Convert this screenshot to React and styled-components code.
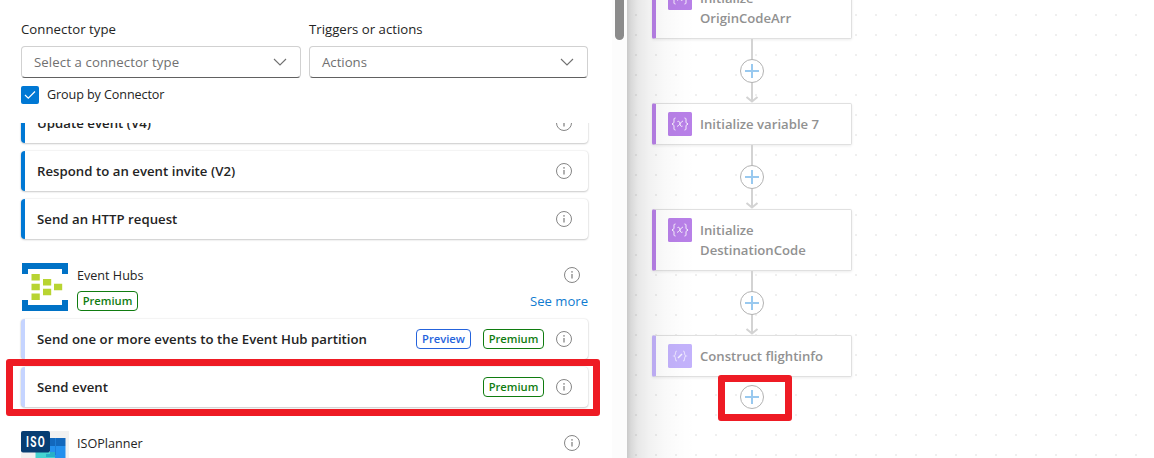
import React from "react";
import styled, { createGlobalStyle } from "styled-components";

const GlobalStyle = createGlobalStyle`
  * { box-sizing: border-box; }
  body {
    margin: 0;
    overflow: hidden;
    font-family: "Segoe UI", "Open Sans", "Noto Sans", sans-serif;
    font-size: 13.2px;
    line-height: 20px;
    color: #242424;
    background: #fff;
  }
`;

const Page = styled.div`
  position: relative;
  display: flex;
  width: 1154px;
  height: 458px;
  overflow: hidden;
`;

const Panel = styled.aside`
  display: flex;
  flex: 0 0 627px;
  background: #fff;
`;

const PanelBody = styled.div`
  display: flex;
  flex-direction: column;
  flex: 0 0 612px;
  padding: 19px 15px 0 21px;
`;

const ScrollTrack = styled.div`
  flex: 1;
  padding-left: 3px;
  background: #fcfcfc;
`;

const ScrollThumb = styled.div`
  width: 9px;
  height: 40px;
  border-radius: 0 0 5px 5px;
  background: #8b8b8b;
`;

const Filters = styled.div`
  display: grid;
  grid-template-columns: 280px 279px;
  gap: 8px;
`;

const Field = styled.div`
  display: flex;
  flex-direction: column;
  gap: 7px;
`;

const Text = styled.span`
  white-space: nowrap;
  letter-spacing: ${(p) => p.$spacing || 0}px;
`;

const Select = styled.div`
  display: flex;
  align-items: center;
  justify-content: space-between;
  height: 32px;
  padding: 0 13px 0 12px;
  border: 1px solid #d1d1d1;
  border-bottom-color: #616161;
  border-radius: 4px;
  color: #707070;
`;

const CheckRow = styled.div`
  display: flex;
  align-items: center;
  gap: 8px;
  height: 18px;
  margin-top: 8px;
  font-size: 12.6px;
`;

const Checkbox = styled.span`
  display: grid;
  place-items: center;
  width: 18px;
  height: 18px;
  border-radius: 2px;
  background: #0078d4;
`;

const List = styled.div`
  height: 335px;
  margin: 19px -10px 0;
  padding: 0 10px;
  overflow: hidden;
`;

const Group = styled.section`
  display: flex;
  flex-direction: column;
  gap: 8px;
  width: 567px;
  margin-top: ${(p) => (p.$scrolled ? "-20px" : "24px")};
`;

const Card = styled.div`
  display: flex;
  align-items: center;
  height: 40px;
  padding: 0 16px 0 12px;
  border-left: 4px solid ${(p) => p.$accent};
  border-radius: 4px;
  background: #fff;
  box-shadow: 0 0 2px rgba(0, 0, 0, 0.14), 0 1px 2px rgba(0, 0, 0, 0.18);
`;

const CardTitle = styled(Text)`
  flex: 1;
  font-weight: 600;
`;

const Badge = styled.span`
  display: grid;
  place-items: center;
  width: ${(p) => p.$width}px;
  height: 20px;
  margin-right: 12px;
  border: 1px solid currentColor;
  border-radius: 4px;
  color: ${(p) => (p.$preview ? "#2563dc" : "#107c10")};
  font-size: 11.2px;
  font-weight: 600;
  line-height: 18px;
`;

const GroupHeader = styled.header`
  display: flex;
  gap: 8px;
  height: 48px;
`;

const GroupInfo = styled.div`
  display: flex;
  flex-direction: column;
  flex: 1;
  gap: 5px;
  padding-top: 3px;
`;

const GroupName = styled(Text)`
  font-size: 12.6px;
  font-weight: 500;
`;

const GroupActions = styled.div`
  display: flex;
  flex-direction: column;
  align-items: flex-end;
  gap: 8px;
  padding-top: 4px;
`;

const InfoSlot = styled.span`
  display: flex;
  padding-right: 8px;
`;

const Link = styled.a`
  color: #0f7bd0;
  font-size: 13.1px;
  line-height: 20px;
`;

const Canvas = styled.main`
  position: relative;
  flex: 1;
  background: #fff;
`;

const DotGrid = styled.svg`
  position: absolute;
  inset: 0;
  width: 527px;
  height: 458px;
`;

const Flow = styled.div`
  position: relative;
  display: flex;
  flex-direction: column;
  width: 200px;
  margin: -23px 0 0 25px;
`;

const Node = styled.div`
  display: flex;
  gap: 8px;
  height: ${(p) => (p.$tall ? 62 : 42)}px;
  padding: 8px 8px 8px 12px;
  border: 1px solid #e0e0e0;
  border-left: 4px solid ${(p) => p.$accent};
  border-radius: 2px;
  background: #fff;
  box-shadow: 0 1px 3px rgba(0, 0, 0, 0.08);
`;

const NodeTitle = styled.span`
  padding-top: 2px;
  color: #919191;
  font-size: 13.15px;
  font-weight: 600;
`;

const Connector = styled.div`
  display: flex;
  justify-content: center;
  height: ${(p) => (p.$last ? 40 : 64)}px;
`;

const PanelShadow = styled.div`
  position: absolute;
  inset: 0 auto 0 0;
  width: 68px;
  background: linear-gradient(
    90deg,
    rgba(0, 0, 0, 0.21) 0,
    rgba(0, 0, 0, 0.15) 4px,
    rgba(0, 0, 0, 0.09) 11px,
    rgba(0, 0, 0, 0.055) 22px,
    rgba(0, 0, 0, 0.025) 38px,
    rgba(0, 0, 0, 0.008) 54px,
    transparent
  );
`;

const Highlight = styled.div`
  position: absolute;
  left: ${(p) => p.$x}px;
  top: ${(p) => p.$y}px;
  width: ${(p) => p.$w}px;
  height: ${(p) => p.$h}px;
  border: 7px solid #ee1b24;
  border-radius: 3px;
`;

const Chevron = () => (
  <svg width="14" height="8" viewBox="0 0 14 8" fill="none" stroke="#707070" strokeWidth="1.1">
    <path d="M1 1l6 6 6-6" />
  </svg>
);

const Info = () => (
  <svg width="16" height="16" viewBox="0 0 16 16" fill="none">
    <circle cx="8" cy="8" r="7.5" stroke="#858585" />
    <path d="M8 7v4.6" stroke="#858585" strokeWidth="1.3" />
    <circle cx="8" cy="4.9" r=".8" fill="#858585" />
  </svg>
);

const EventHubsLogo = () => (
  <svg width="48" height="48" viewBox="0 0 48 48">
    <path d="M1 0h46v11h-6V6H7v5H1zM1 48h46V37h-6v5H7v-5H1z" fill="#0072c6" />
    <path
      d="M10.500 11h8.300v6.600h-8.300zM10.500 20.700h8.300v6.600h-8.300zM10.500 30.400h8.300v6.600h-8.300zM22 16.100h8.200v6.500H22zM22 25.800h8.200v6.500H22zM33 20.700h8.200v6.600H33z"
      fill="#b8d432"
    />
  </svg>
);

const IsoLogo = () => (
  <svg width="48" height="48" viewBox="0 0 48 48">
    <path d="M0 0h48v48H0z" fill="#f1f1f1" />
    <path d="M29 7h15.500v8H29z" fill="#1268bd" />
    <path d="M29 15h15.500v33H29z" fill="#2490ee" />
    <path d="M34 7h1v17h-1z" fill="#1c7dd6" />
    <path d="M14.500 21H34v27H14.500z" fill="#46d4d1" />
    <path d="M29 21h5v5h-9v-3h4z" fill="#28afc7" />
    <rect width="29" height="21.500" rx="2" fill="#073e73" />
    <text
      transform="translate(5 16) scale(.72 1)"
      fill="#fff"
      fontFamily="Roboto, sans-serif"
      fontSize="14"
      fontWeight="700"
      letterSpacing="1.8"
    >
      ISO
    </text>
  </svg>
);

const VariableIcon = () => (
  <svg width="24" height="24" viewBox="0 0 24 24" fill="none" stroke="#fff" strokeWidth="1">
    <rect width="24" height="24" rx="1.500" fill="#b880e8" stroke="none" />
    <path d="M7.500 6C5.800 6 6 7 6 8.500S6 11.500 4 12c2 .5 2 2 2 3.500S5.800 18 7.500 18M16.500 6C18.200 6 18 7 18 8.500S18 11.500 20 12c-2 .5-2 2-2 3.500S18.200 18 16.500 18" />
    <path d="M9.500 9.500c1.700-.6 2 .2 2.400 2s.8 3.600 2.600 2.600M15 9.300c-2-.6-3.800 5.400-6 4.900" strokeWidth=".9" />
  </svg>
);

const ComposeIcon = () => (
  <svg width="24" height="24" viewBox="0 0 24 24" fill="none" stroke="#e8e0ff" strokeWidth="1.1">
    <rect width="24" height="24" rx="1.500" fill="#c3b2fc" stroke="none" />
    <path d="M9 7C7.500 7 7.500 7.800 7.500 9s0 2.500-1.500 3c1.500.5 1.500 1.800 1.500 3s0 2 1.500 2M15 7c1.500 0 1.500.8 1.500 2s0 2.500 1.500 3c-1.500.5-1.500 1.800-1.500 3s0 2-1.500 2" />
    <path d="M10 14l4-4" stroke="#f6f2ff" strokeWidth="1.500" />
  </svg>
);

const AddStep = ({ last }) => (
  <Connector $last={last}>
    <svg width="26" height={last ? 40 : 64} viewBox={last ? "0 12 26 40" : "0 0 26 64"} fill="none">
      {!last && (
        <>
          <path d="M13 0v63" stroke="#d3d3d3" strokeWidth="2" />
          <path d="M7.500 58l5.500 4.500 5.500-4.500" stroke="#d3d3d3" strokeWidth="2" />
        </>
      )}
      <circle cx="13" cy="32" r="11.500" fill="#fff" stroke="#b2b2b2" />
      <path d="M6 32h14M13 25v14" stroke="#99c9ef" strokeWidth="2" />
    </svg>
  </Connector>
);

const Premium = () => <Badge $width={61}>Premium</Badge>;

const ActionCard = ({ title, accent, children }) => (
  <Card $accent={accent}>
    <CardTitle $spacing={0.03}>{title}</CardTitle>
    {children}
    <Info />
  </Card>
);

export default function App() {
  return (
    <>
      <GlobalStyle />
      <Page>
        <Panel>
          <PanelBody>
            <Filters>
              <Field>
                <Text $spacing={0.05}>Connector type</Text>
                <Select><Text $spacing={0.1}>Select a connector type</Text><Chevron /></Select>
              </Field>
              <Field>
                <Text>Triggers or actions</Text>
                <Select><Text>Actions</Text><Chevron /></Select>
              </Field>
            </Filters>
            <CheckRow>
              <Checkbox>
                <svg width="12" height="10" viewBox="0 0 12 10" fill="none" stroke="#fff" strokeWidth="1.2">
                  <path d="M1 5l3.300 3.200L11 1.500" />
                </svg>
              </Checkbox>
              <Text $spacing={-0.1}>Group by Connector</Text>
            </CheckRow>
            <List>
              <Group $scrolled>
                <ActionCard title="Update event (V4)" accent="#0078d4" />
                <ActionCard title="Respond to an event invite (V2)" accent="#0078d4" />
                <ActionCard title="Send an HTTP request" accent="#0078d4" />
              </Group>
              <Group>
                <GroupHeader>
                  <EventHubsLogo />
                  <GroupInfo>
                    <GroupName>Event Hubs</GroupName>
                    <Premium />
                  </GroupInfo>
                  <GroupActions>
                    <InfoSlot><Info /></InfoSlot>
                    <Link>See more</Link>
                  </GroupActions>
                </GroupHeader>
                <ActionCard title="Send one or more events to the Event Hub partition" accent="#c5d4ff">
                  <Badge $preview $width={55}>Preview</Badge>
                  <Premium />
                </ActionCard>
                <ActionCard title="Send event" accent="#c5d4ff">
                  <Premium />
                </ActionCard>
              </Group>
              <Group>
                <GroupHeader>
                  <IsoLogo />
                  <GroupInfo><GroupName>ISOPlanner</GroupName></GroupInfo>
                  <GroupActions><InfoSlot><Info /></InfoSlot></GroupActions>
                </GroupHeader>
              </Group>
            </List>
          </PanelBody>
          <ScrollTrack><ScrollThumb /></ScrollTrack>
        </Panel>
        <Canvas>
          <DotGrid>
            <defs>
              <pattern id="dots" x="8" y="14" width="20" height="20" patternUnits="userSpaceOnUse">
                <rect width="2" height="2" fill="#efefef" />
              </pattern>
            </defs>
            <rect width="527" height="458" fill="url(#dots)" />
          </DotGrid>
          <Flow>
            <Node $tall $accent="#b880e8"><VariableIcon /><NodeTitle>Initialize<br />OriginCodeArr</NodeTitle></Node>
            <AddStep />
            <Node $accent="#b880e8"><VariableIcon /><NodeTitle>Initialize variable 7</NodeTitle></Node>
            <AddStep />
            <Node $tall $accent="#b880e8"><VariableIcon /><NodeTitle>Initialize<br />DestinationCode</NodeTitle></Node>
            <AddStep />
            <Node $accent="#c3b2fc"><ComposeIcon /><NodeTitle>Construct flightinfo</NodeTitle></Node>
            <AddStep last />
          </Flow>
          <PanelShadow />
        </Canvas>
        <Highlight $x={6} $y={359} $w={594} $h={57} />
        <Highlight $x={718} $y={375} $w={74} $h={46} />
      </Page>
    </>
  );
}
